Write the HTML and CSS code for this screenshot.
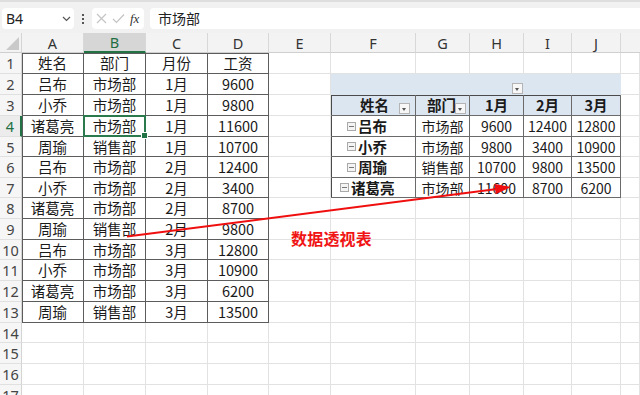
FILE: index.html
```html
<!DOCTYPE html>
<html lang="zh">
<head>
<meta charset="utf-8">
<title>Sheet</title>
<link rel="stylesheet" href="styles.css">
</head>
<body>
<div class="bar">
  <div class="namebox"><span>B4</span><svg width="9" height="6" viewBox="0 0 9 6"><path d="M1 1 L4.5 4.5 L8 1" fill="none" stroke="#555" stroke-width="1.2"/></svg></div>
  <div class="dots"><i></i><i></i><i></i></div>
  <div class="fxbox">
    <svg width="11" height="11" viewBox="0 0 11 11"><path d="M1 1 L10 10 M10 1 L1 10" stroke="#c4c4c4" stroke-width="1.2"/></svg>
    <svg width="13" height="11" viewBox="0 0 13 11"><path d="M1 6 L4.5 9.5 L12 1.5" fill="none" stroke="#c4c4c4" stroke-width="1.2"/></svg>
    <span class="fx">fx</span>
  </div>
  <div class="input">市场部</div>
</div>

<div class="sheet">
  <div class="corner"><span class="tri"></span></div>
  <div class="ch">A</div><div class="ch sel">B</div><div class="ch">C</div><div class="ch">D</div><div class="ch">E</div><div class="ch">F</div><div class="ch">G</div><div class="ch">H</div><div class="ch">I</div><div class="ch">J</div><div class="ch end"></div>

  <div class="rh">1</div><div class="c t tl tt">姓名</div><div class="c t tt">部门</div><div class="c t tt">月份</div><div class="c t tt">工资</div><div class="c"></div><div class="c"></div><div class="c"></div><div class="c"></div><div class="c"></div><div class="c"></div><div class="c"></div>

  <div class="rh">2</div><div class="c t tl">吕布</div><div class="c t">市场部</div><div class="c t">1月</div><div class="c t">9600</div><div class="c"></div>
  <div class="band"><span class="dd dd-band"></span></div><div class="c"></div>

  <div class="rh">3</div><div class="c t tl">小乔</div><div class="c t">市场部</div><div class="c t">1月</div><div class="c t">9800</div><div class="c"></div>
  <div class="c p ph pl pt">姓名<span class="dd dd-f"></span></div><div class="c p ph pt g-h">部门<span class="dd dd-g"></span></div><div class="c p ph pt">1月</div><div class="c p ph pt">2月</div><div class="c p ph pt">3月</div><div class="c"></div>

  <div class="rh act">4</div><div class="c t tl">诸葛亮</div><div class="c t cur">市场部</div><div class="c t">1月</div><div class="c t">11600</div><div class="c"></div>
  <div class="c p pl pn"><span class="box"></span>吕布</div><div class="c p">市场部</div><div class="c p">9600</div><div class="c p">12400</div><div class="c p">12800</div><div class="c"></div>

  <div class="rh">5</div><div class="c t tl">周瑜</div><div class="c t">销售部</div><div class="c t">1月</div><div class="c t">10700</div><div class="c"></div>
  <div class="c p pl pn"><span class="box"></span>小乔</div><div class="c p">市场部</div><div class="c p">9800</div><div class="c p">3400</div><div class="c p">10900</div><div class="c"></div>

  <div class="rh">6</div><div class="c t tl">吕布</div><div class="c t">市场部</div><div class="c t">2月</div><div class="c t">12400</div><div class="c"></div>
  <div class="c p pl pn"><span class="box"></span>周瑜</div><div class="c p">销售部</div><div class="c p">10700</div><div class="c p">9800</div><div class="c p">13500</div><div class="c"></div>

  <div class="rh">7</div><div class="c t tl">小乔</div><div class="c t">市场部</div><div class="c t">2月</div><div class="c t">3400</div><div class="c"></div>
  <div class="c p pl pn top"><span class="box"></span>诸葛亮</div><div class="c p">市场部</div><div class="c p">11600</div><div class="c p">8700</div><div class="c p">6200</div><div class="c"></div>

  <div class="rh">8</div><div class="c t tl">诸葛亮</div><div class="c t">市场部</div><div class="c t">2月</div><div class="c t">8700</div><div class="c"></div><div class="c"></div><div class="c"></div><div class="c"></div><div class="c"></div><div class="c"></div><div class="c"></div>

  <div class="rh">9</div><div class="c t tl">周瑜</div><div class="c t">销售部</div><div class="c t">2月</div><div class="c t">9800</div><div class="c"></div><div class="c"></div><div class="c"></div><div class="c"></div><div class="c"></div><div class="c"></div><div class="c"></div>

  <div class="rh">10</div><div class="c t tl">吕布</div><div class="c t">市场部</div><div class="c t">3月</div><div class="c t">12800</div><div class="c"></div><div class="c"></div><div class="c"></div><div class="c"></div><div class="c"></div><div class="c"></div><div class="c"></div>

  <div class="rh">11</div><div class="c t tl">小乔</div><div class="c t">市场部</div><div class="c t">3月</div><div class="c t">10900</div><div class="c"></div><div class="c"></div><div class="c"></div><div class="c"></div><div class="c"></div><div class="c"></div><div class="c"></div>

  <div class="rh">12</div><div class="c t tl">诸葛亮</div><div class="c t">市场部</div><div class="c t">3月</div><div class="c t">6200</div><div class="c"></div><div class="c"></div><div class="c"></div><div class="c"></div><div class="c"></div><div class="c"></div><div class="c"></div>

  <div class="rh">13</div><div class="c t tl">周瑜</div><div class="c t">销售部</div><div class="c t">3月</div><div class="c t">13500</div><div class="c"></div><div class="c"></div><div class="c"></div><div class="c"></div><div class="c"></div><div class="c"></div><div class="c"></div>

  <div class="rh">14</div><div class="c"></div><div class="c"></div><div class="c"></div><div class="c"></div><div class="c"></div><div class="c"></div><div class="c"></div><div class="c"></div><div class="c"></div><div class="c"></div><div class="c"></div>
  <div class="rh">15</div><div class="c"></div><div class="c"></div><div class="c"></div><div class="c"></div><div class="c"></div><div class="c"></div><div class="c"></div><div class="c"></div><div class="c"></div><div class="c"></div><div class="c"></div>
  <div class="rh">16</div><div class="c"></div><div class="c"></div><div class="c"></div><div class="c"></div><div class="c"></div><div class="c"></div><div class="c"></div><div class="c"></div><div class="c"></div><div class="c"></div><div class="c"></div>
  <div class="rh">17</div><div class="c"></div><div class="c"></div><div class="c"></div><div class="c"></div><div class="c"></div><div class="c"></div><div class="c"></div><div class="c"></div><div class="c"></div><div class="c"></div><div class="c"></div>
</div>

<svg class="arrow" width="640" height="395" viewBox="0 0 640 395">
  <line x1="127" y1="236.5" x2="497" y2="189" stroke="#f00f0f" stroke-width="2"/>
  <polygon points="511,187 495.7,194.2 494.5,184" fill="#f00f0f"/>
</svg>
<div class="label">数据透视表</div>
</body>
</html>
```

FILE: styles.css
```css
html, body {
  margin: 0;
  padding: 0;
}
body {
  width: 640px;
  height: 395px;
  overflow: hidden;
  position: relative;
  background: #fff;
  font-family: "Noto Sans CJK SC", "Noto Sans", sans-serif;
  color: #1a1a1a;
}

/* formula bar */
.bar {
  height: 33px;
  box-sizing: border-box;
  border-top: 2px solid #dedede;
  background: #f1f1f1;
  display: flex;
  align-items: flex-start;
  padding: 6px 0 0 2px;
}
.namebox {
  width: 72px;
  height: 21px;
  box-sizing: border-box;
  background: #fff;
  border-radius: 4px;
  display: flex;
  align-items: center;
  justify-content: space-between;
  padding: 0 3px 0 4px;
  font-family: "Noto Sans", sans-serif;
  font-size: 14px;
  color: #222;
}
.dots {
  width: 18px;
  height: 21px;
  display: flex;
  flex-direction: column;
  align-items: center;
  justify-content: center;
  gap: 2px;
}
.dots i {
  display: block;
  width: 2px;
  height: 2px;
  background: #555;
}
.fxbox {
  width: 52px;
  height: 21px;
  box-sizing: border-box;
  background: #fff;
  border-radius: 4px;
  display: flex;
  align-items: center;
  gap: 5px;
  padding-left: 4px;
}
.fx {
  font-family: "Liberation Serif", serif;
  font-style: italic;
  font-size: 13px;
  color: #333;
}
.input {
  flex: 1;
  height: 21px;
  margin-left: 6px;
  background: #fff;
  border-radius: 4px 0 0 4px;
  font-size: 14px;
  line-height: 21px;
  padding-left: 8px;
  color: #222;
}

/* grid */
.sheet {
  display: grid;
  grid-template-columns: 22px 62px 62px 62px 61px 62px 85px 54px 54px 48px 49px 1fr;
  grid-template-rows: 20px 21px 21px 21px 21px 20px 21px 20px 21px 21px 20px 21px 21px 21px 20px 21px 21px 21px;
  font-size: 14px;
}
.corner {
  background: #f3f3f3;
  border-right: 1px solid #d4d4d4;
  border-bottom: 1px solid #cfcfcf;
  position: relative;
}
.tri {
  position: absolute;
  right: 2px;
  bottom: 2px;
  width: 0;
  height: 0;
  border-left: 13px solid transparent;
  border-bottom: 13px solid #c9c9c9;
}
.ch {
  background: #f3f3f3;
  border-right: 1px solid #d8d8d8;
  border-bottom: 1px solid #cfcfcf;
  display: flex;
  align-items: center;
  justify-content: center;
  font-family: "Noto Sans", sans-serif;
  font-size: 14.5px;
  color: #333;
}
.ch.sel {
  background: #d6d6d6;
  color: #1e6e42;
  border-bottom: 2px solid #217346;
}
.ch.end {
  border-right: none;
}
.rh {
  background: #f6f6f6;
  border-right: 1px solid #d4d4d4;
  border-bottom: 1px solid #e0e0e0;
  display: flex;
  align-items: center;
  justify-content: center;
  font-family: "Noto Sans", sans-serif;
  font-size: 14.5px;
  color: #444;
}
.rh.act {
  color: #1e6e42;
  background: #ececec;
  border-right: 2px solid #217346;
}
.c {
  border-right: 1px solid #e2e2e2;
  border-bottom: 1px solid #e2e2e2;
  display: flex;
  align-items: center;
  justify-content: center;
  white-space: nowrap;
  position: relative;
  line-height: 18px;
}

/* source table */
.t {
  border-right-color: #5c5c5c;
  border-bottom-color: #5c5c5c;
  color: #1a1a1a;
  font-size: 14.5px;
}
.tl { box-shadow: inset 1px 0 0 #5c5c5c; }
.tt { box-shadow: inset 0 1px 0 #5c5c5c; }
.tl.tt { box-shadow: inset 1px 1px 0 #5c5c5c; }

.cur::after {
  content: "";
  position: absolute;
  left: -1px;
  top: -1px;
  right: -1px;
  bottom: -1px;
  border: 2px solid #2a7a4e;
}
.cur::before {
  content: "";
  position: absolute;
  right: -3px;
  bottom: -3px;
  width: 5px;
  height: 5px;
  background: #217346;
  border: 1px solid #fff;
  z-index: 2;
}

/* pivot */
.band {
  grid-column: span 5;
  background: #dce6f1;
  position: relative;
}
.p {
  border-right-color: #6a6a6a;
  border-bottom-color: #6a6a6a;
  color: #1a1a1a;
}
.ph {
  background: #dce6f1;
  font-weight: bold;
  font-size: 14.5px;
}
.pl { box-shadow: inset 1px 0 0 #4a4a4a; }
.pt { box-shadow: inset 0 1px 0 #4a4a4a; }
.pl.pt { box-shadow: inset 1px 1px 0 #4a4a4a; }
.ph.pl.pt {
  justify-content: flex-start;
  padding-left: 29px;
}
.g-h {
  justify-content: flex-start;
  padding-left: 11px;
}
.pn {
  justify-content: flex-start;
  padding-left: 16px;
  font-weight: bold;
  font-size: 14.5px;
  gap: 2px;
}
.pn.top {
  padding-left: 9px;
}
.box {
  width: 9px;
  height: 9px;
  box-sizing: border-box;
  border: 1px solid #a9a9a9;
  background: #f4f4f4;
  position: relative;
  flex: none;
}
.box::after {
  content: "";
  position: absolute;
  left: 1px;
  right: 1px;
  top: 3px;
  height: 1px;
  background: #777;
}
.dd {
  position: absolute;
  width: 11px;
  height: 11px;
  box-sizing: border-box;
  border: 1px solid #b4b4b4;
  background: #f7f7f7;
}
.dd::after {
  content: "";
  position: absolute;
  left: 2px;
  top: 4px;
  border-left: 2.5px solid transparent;
  border-right: 2.5px solid transparent;
  border-top: 3px solid #555;
}
.dd-band { left: 181px; top: 9px; }
.dd-f { right: 5px; top: 8px; }
.dd-g { right: 3px; top: 8px; }

/* overlays */
.arrow {
  position: absolute;
  left: 0;
  top: 0;
  pointer-events: none;
}
.label {
  position: absolute;
  left: 291px;
  top: 228px;
  font-size: 16px;
  line-height: 20px;
  font-weight: bold;
  color: #f01414;
  letter-spacing: 0.2px;
}
```
